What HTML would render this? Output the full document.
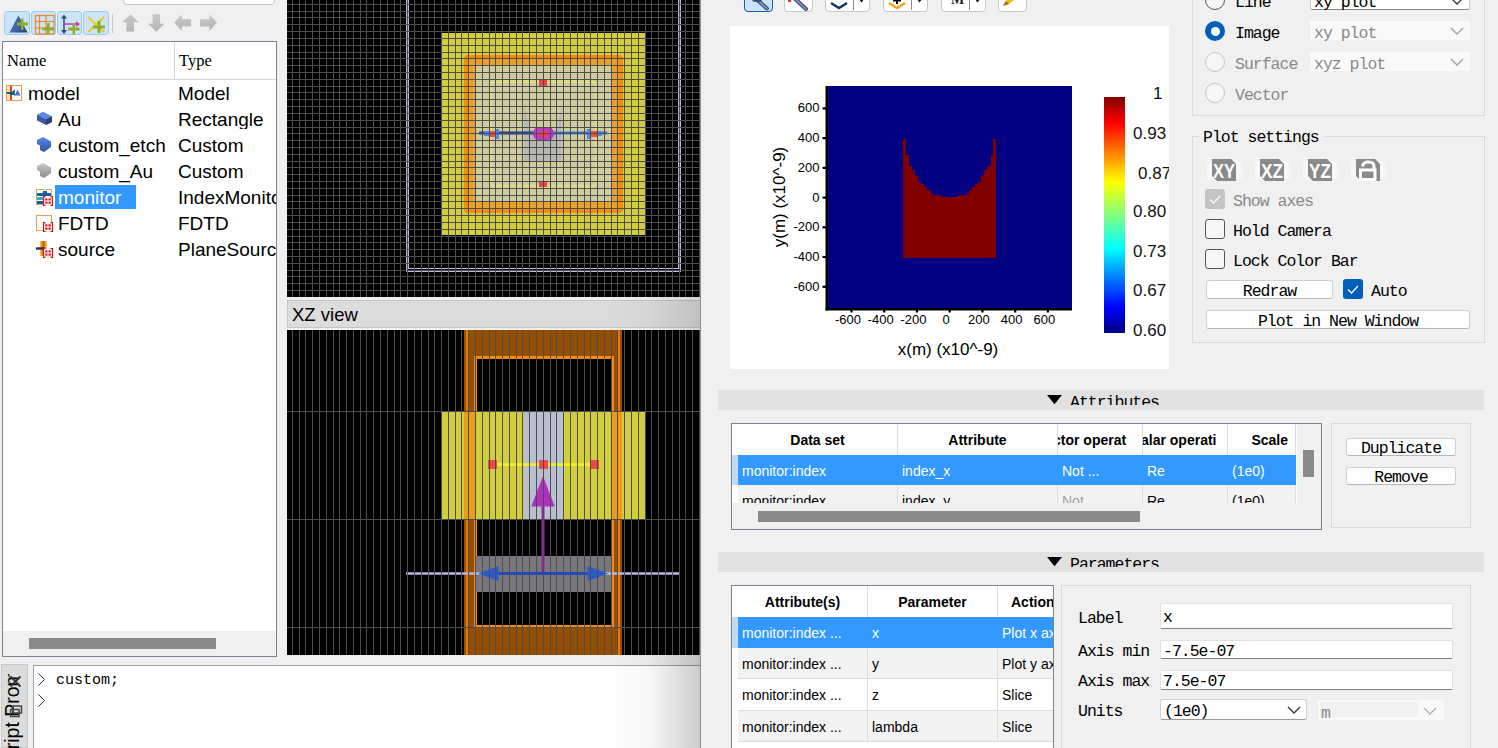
<!DOCTYPE html><html><head><meta charset="utf-8"><style>
html,body{margin:0;padding:0;}
body{width:1498px;height:748px;overflow:hidden;position:relative;background:#f0f0f0;font-family:"Liberation Sans",sans-serif;}
div{box-sizing:border-box;}
.m{font-family:"Liberation Mono",monospace;}
</style></head><body>
<div style="position:absolute;left:123px;top:-12px;width:152px;height:17px;background:#fff;border:1px solid #c4c4c4;border-radius:0 0 4px 4px;"></div>
<div style="position:absolute;left:4px;top:11px;width:26px;height:24px;background:#cce4f7;border:1px solid #99cdf9;border-radius:3px;"></div>
<div style="position:absolute;left:31px;top:11px;width:25px;height:24px;background:#cce4f7;border:1px solid #99cdf9;border-radius:3px;"></div>
<div style="position:absolute;left:57px;top:11px;width:25px;height:24px;background:#cce4f7;border:1px solid #99cdf9;border-radius:3px;"></div>
<div style="position:absolute;left:83px;top:11px;width:26px;height:24px;background:#cce4f7;border:1px solid #99cdf9;border-radius:3px;"></div>
<div style="position:absolute;left:112px;top:14px;width:1px;height:19px;background:#c8c8c8;"></div>
<div style="position:absolute;left:2px;top:41px;width:275px;height:616px;background:#fff;border:1px solid #7a8391;"></div>
<div style="position:absolute;left:3px;top:79px;width:273px;height:1px;background:#d5d5d5;"></div>
<div style="position:absolute;left:174px;top:42px;width:1px;height:37px;background:#d5d5d5;"></div>
<div style="position:absolute;left:7px;top:52.75px;font-family:'Liberation Serif', serif;font-size:16.5px;line-height:1;color:#000;white-space:nowrap;">Name</div>
<div style="position:absolute;left:179px;top:52.75px;font-family:'Liberation Serif', serif;font-size:16.5px;line-height:1;color:#000;white-space:nowrap;">Type</div>
<div style="position:absolute;left:28px;top:83.5px;font-family:'Liberation Sans', sans-serif;font-size:19px;line-height:1;color:#000;white-space:nowrap;">model</div>
<div style="position:absolute;left:178px;top:83.5px;width:98px;overflow:hidden;font-size:19px;line-height:1;white-space:nowrap;">Model</div>
<div style="position:absolute;left:58px;top:109.5px;font-family:'Liberation Sans', sans-serif;font-size:19px;line-height:1;color:#000;white-space:nowrap;">Au</div>
<div style="position:absolute;left:178px;top:109.5px;width:98px;overflow:hidden;font-size:19px;line-height:1;white-space:nowrap;">Rectangle</div>
<div style="position:absolute;left:58px;top:135.5px;font-family:'Liberation Sans', sans-serif;font-size:19px;line-height:1;color:#000;white-space:nowrap;">custom_etch</div>
<div style="position:absolute;left:178px;top:135.5px;width:98px;overflow:hidden;font-size:19px;line-height:1;white-space:nowrap;">Custom</div>
<div style="position:absolute;left:58px;top:161.5px;font-family:'Liberation Sans', sans-serif;font-size:19px;line-height:1;color:#000;white-space:nowrap;">custom_Au</div>
<div style="position:absolute;left:178px;top:161.5px;width:98px;overflow:hidden;font-size:19px;line-height:1;white-space:nowrap;">Custom</div>
<div style="position:absolute;left:55px;top:185px;width:81px;height:24px;background:#3399ff;"></div>
<div style="position:absolute;left:58px;top:187.5px;font-family:'Liberation Sans', sans-serif;font-size:19px;line-height:1;color:#fff;white-space:nowrap;">monitor</div>
<div style="position:absolute;left:178px;top:187.5px;width:98px;overflow:hidden;font-size:19px;line-height:1;white-space:nowrap;">IndexMonitor</div>
<div style="position:absolute;left:58px;top:213.5px;font-family:'Liberation Sans', sans-serif;font-size:19px;line-height:1;color:#000;white-space:nowrap;">FDTD</div>
<div style="position:absolute;left:178px;top:213.5px;width:98px;overflow:hidden;font-size:19px;line-height:1;white-space:nowrap;">FDTD</div>
<div style="position:absolute;left:58px;top:239.5px;font-family:'Liberation Sans', sans-serif;font-size:19px;line-height:1;color:#000;white-space:nowrap;">source</div>
<div style="position:absolute;left:178px;top:239.5px;width:98px;overflow:hidden;font-size:19px;line-height:1;white-space:nowrap;">PlaneSource</div>
<div style="position:absolute;left:3px;top:631px;width:273px;height:25px;background:#f0f0f0;"></div>
<div style="position:absolute;left:29px;top:638px;width:187px;height:11px;background:#8a8a8a;"></div>
<div style="position:absolute;left:33px;top:665px;width:668px;height:83px;background:#fff;border-top:1px solid #a0a0a0;border-left:1px solid #a0a0a0;"></div>
<div style="position:absolute;left:1px;top:664px;width:27px;height:84px;background:#dcdcdc;border:1px solid #c8c8c8;"></div>
<svg style="position:absolute;left:36px;top:671px" width="12" height="40"><path d="M2.5 2.5 L8.5 8.5 L2.5 14.5 M2.5 23.5 L8.5 29.5 L2.5 35.5" fill="none" stroke="#2a2a60" stroke-width="1"/></svg>
<div style="position:absolute;left:56px;top:673px;font-family:'Liberation Mono', monospace;font-size:15px;line-height:1;color:#000;white-space:nowrap;">custom;</div>
<svg style="position:absolute;left:0;top:0" width="230" height="40">
<defs>
<linearGradient id="tri" x1="0" y1="0" x2="1" y2="1"><stop offset="0" stop-color="#2a4a8a"/><stop offset="0.5" stop-color="#4a6ab0"/><stop offset="1" stop-color="#1e3a70"/></linearGradient>
<linearGradient id="agr" x1="0" y1="0" x2="0" y2="1"><stop offset="0" stop-color="#c8c8c8"/><stop offset="1" stop-color="#b4b4b4"/></linearGradient>
</defs>
<path d="M9.5 32.5 L18.5 15.5 L27.5 32.5 Z" fill="url(#tri)"/>
<path d="M21 18.5 h2.5 v4 h4.5 v3 h-4.5 v4.5 h-2.5 v-4.5 h-4 v-3 h4 Z" fill="#90ad2c"/>
<g fill="none" stroke="#f0862a" stroke-width="1.2">
<rect x="35.5" y="15.5" width="18.5" height="18.5"/>
<line x1="39.5" y1="15.5" x2="39.5" y2="34"/><line x1="46" y1="15.5" x2="46" y2="34"/>
<line x1="35.5" y1="21.5" x2="54" y2="21.5"/><line x1="35.5" y1="28" x2="54" y2="28"/>
</g>
<path d="M47 23 h2.5 v4.5 h4.5 v3 h-4.5 v4 h-2.5 v-4 h-4.5 v-3 h4.5 Z" fill="#90ad2c"/>
<line x1="64" y1="16" x2="64" y2="33" stroke="#2a4a80" stroke-width="1.5"/>
<path d="M64 14.5 L61 18.5 H67 Z M64 34 L61 30 H67 Z" fill="#2a4a80"/>
<line x1="65" y1="24" x2="77" y2="24" stroke="#d030d0" stroke-width="1.5"/>
<path d="M80 24 L76 21 V27 Z" fill="#d030d0"/>
<path d="M72.5 23 h2.5 v4.5 h4.5 v3 h-4.5 v4 h-2.5 v-4 h-4.5 v-3 h4.5 Z" fill="#90ad2c"/>
<g stroke="#f0c820" stroke-width="2" fill="none"><line x1="88" y1="17" x2="104" y2="32"/><line x1="104" y1="17" x2="88" y2="32"/></g>
<path d="M97.5 21 h3 v4.5 h4.5 v3 h-4.5 v4.5 h-3 v-4.5 h-4.5 v-3 h4.5 Z" fill="#90ad2c"/>
<path d="M130.5 14.2 L138.7 22.2 H134 V31.4 H126.4 V22.2 H121.9 Z" fill="url(#agr)"/>
<path d="M156.3 31.8 L164.6 23.8 H160 V14.3 H152.6 V23.8 H148 Z" fill="url(#agr)"/>
<path d="M174.1 22.6 L181.9 14.7 V19.3 H191 V26.6 H181.9 V30.8 Z" fill="url(#agr)"/>
<path d="M217.2 22.6 L209.4 14.7 V19.3 H200.1 V26.6 H209.4 V30.8 Z" fill="url(#agr)"/>
</svg>
<svg style="position:absolute;left:0;top:80px" width="60" height="180" viewBox="0 80 60 180">
<defs>
<linearGradient id="brk" x1="0" y1="0" x2="0" y2="1"><stop offset="0" stop-color="#5a8ae8"/><stop offset="1" stop-color="#2a50a8"/></linearGradient>
<linearGradient id="gbk" x1="0" y1="0" x2="0" y2="1"><stop offset="0" stop-color="#c8c8c8"/><stop offset="1" stop-color="#8c8c8c"/></linearGradient>
<linearGradient id="src" x1="0" y1="0" x2="1" y2="0"><stop offset="0" stop-color="#f8d040"/><stop offset="0.5" stop-color="#d05818"/><stop offset="1" stop-color="#f8d040"/></linearGradient>
</defs>
<rect x="6.5" y="85.5" width="15" height="15" fill="none" stroke="#f59a50" stroke-width="1"/>
<rect x="7" y="86" width="3" height="14" fill="#fff3b0"/>
<rect x="10" y="86" width="2" height="14" fill="#e83c1c"/>
<path d="M6.5 92.8 H12 L14 91 V94.6 Z" fill="#0a5a98" stroke="#0a5a98" stroke-width="1.6"/>
<path d="M14.5 95.5 L17.5 89.5 L20.5 95.5 Z" fill="#4f74c0"/>
<path d="M37 115 L43 112 L52 116.5 V122 L46 125 L37 120.5 Z" fill="#3e5a98"/>
<path d="M37 115 L43 112 L52 116.5 L46 119.5 Z" fill="#5a88e8"/>
<path d="M46 119.5 L52 116.5 V122 L46 125 Z" fill="#2a4278"/>
<path d="M37 140 L43 137 L51 141.5 V147 L44 152 L40 150 V145.5 L37 144 Z" fill="url(#brk)"/>
<path d="M37 166 L43 163 L51 167.5 V173 L44 178 L40 176 V171.5 L37 170 Z" fill="url(#gbk)"/>
<rect x="36.5" y="189.5" width="15" height="15" fill="#fff" stroke="#b8b860" stroke-width="1"/>
<rect x="37" y="193" width="14" height="3" fill="#1e5aa8"/>
<rect x="37" y="197" width="8" height="3" fill="#30b0d0"/>
<rect x="37" y="201" width="8" height="3" fill="#1e5aa8"/>
<rect x="43" y="191" width="4" height="3" fill="#1e5aa8"/>
<rect x="36.5" y="215.5" width="15" height="15" fill="none" stroke="#f5a050" stroke-width="1"/>
<rect x="40" y="241" width="7" height="15" fill="url(#src)"/>
<line x1="36" y1="248.5" x2="45" y2="248.5" stroke="#303848" stroke-width="2.5"/>
</svg>
<svg style="position:absolute;left:43px;top:195.5px" width="10" height="10"><rect x="0.5" y="0.5" width="9" height="9" fill="#fff"/><path d="M2.5 0.5 H0.5 V9.5 H2.5 M7.5 0.5 H9.5 V9.5 H7.5" fill="none" stroke="#e01010" stroke-width="1.3"/><rect x="2.3" y="2.3" width="2.2" height="2.2" fill="#e01010"/><rect x="5.5" y="2.3" width="2.2" height="2.2" fill="#e01010"/><rect x="2.3" y="5.5" width="2.2" height="2.2" fill="#e01010"/><rect x="5.5" y="5.5" width="2.2" height="2.2" fill="#e01010"/></svg>
<svg style="position:absolute;left:43px;top:221.5px" width="10" height="10"><rect x="0.5" y="0.5" width="9" height="9" fill="#fff"/><path d="M2.5 0.5 H0.5 V9.5 H2.5 M7.5 0.5 H9.5 V9.5 H7.5" fill="none" stroke="#e01010" stroke-width="1.3"/><rect x="2.3" y="2.3" width="2.2" height="2.2" fill="#e01010"/><rect x="5.5" y="2.3" width="2.2" height="2.2" fill="#e01010"/><rect x="2.3" y="5.5" width="2.2" height="2.2" fill="#e01010"/><rect x="5.5" y="5.5" width="2.2" height="2.2" fill="#e01010"/></svg>
<svg style="position:absolute;left:43px;top:247.5px" width="10" height="10"><rect x="0.5" y="0.5" width="9" height="9" fill="#fff"/><path d="M2.5 0.5 H0.5 V9.5 H2.5 M7.5 0.5 H9.5 V9.5 H7.5" fill="none" stroke="#e01010" stroke-width="1.3"/><rect x="2.3" y="2.3" width="2.2" height="2.2" fill="#e01010"/><rect x="5.5" y="2.3" width="2.2" height="2.2" fill="#e01010"/><rect x="2.3" y="5.5" width="2.2" height="2.2" fill="#e01010"/><rect x="5.5" y="5.5" width="2.2" height="2.2" fill="#e01010"/></svg>
<div style="position:absolute;left:1px;top:664px;width:27px;height:84px;overflow:hidden;"><div style="position:absolute;left:1px;top:108px;height:21px;transform-origin:0 0;transform:rotate(-90deg);font-size:19.5px;line-height:21px;white-space:nowrap;">Script Prompt</div></div>
<div style="position:absolute;left:1px;top:664px;width:27px;height:10px;background:#dcdcdc;border:1px solid #c8c8c8;border-bottom:none;"></div>
<svg style="position:absolute;left:8px;top:674px" width="16" height="48"><path d="M2.5 2.5 L12.5 12.5 M12.5 2.5 L2.5 12.5" stroke="#333" stroke-width="1.8"/><rect x="5" y="32" width="8.5" height="7" fill="none" stroke="#444" stroke-width="1.5"/><rect x="2.5" y="35.5" width="8.5" height="7" fill="none" stroke="#444" stroke-width="1.5"/></svg>
<svg style="position:absolute;left:287px;top:0px" width="414" height="297" viewBox="287 0 414 297" shape-rendering="crispEdges">
<rect x="287" y="0" width="414" height="297" fill="#000"/>
<rect x="442" y="33" width="204" height="202" fill="#d2cd3f"/>
<rect x="464" y="55" width="159" height="158" rx="4" fill="#f78b0e"/>
<rect x="468" y="59" width="151" height="150" rx="3" fill="#eba22c"/>
<rect x="475" y="66" width="137" height="136" fill="#cfcb9c"/>
<rect x="490.5" y="81.5" width="106" height="105" rx="5" fill="none" stroke="#dedb88" stroke-width="3" shape-rendering="auto"/>
<path d="M524 106 L530 130 L556 130 L562 106 L562 161 L524 161 Z" fill="#b9b9b3" shape-rendering="auto"/>

<path d="M406.5 -5 V271.5 H680.5 V-5" fill="none" stroke="#bdbbe6" stroke-width="1"/>
<path d="M408.5 -5 V268.5 H678.5 V-5" fill="none" stroke="#bdbbe6" stroke-width="1"/>
<g shape-rendering="auto">
<rect x="479" y="131.5" width="64" height="3" fill="#0a3aa0"/>
<rect x="543" y="131.5" width="64" height="3" fill="#3a8ef0"/>
<rect x="479" y="132.5" width="128" height="1" fill="#1a50c0"/>
<path d="M531.8 133.5 L536 127 H551 L555.3 133.5 L551 140 H536 Z" fill="#c535d5"/>
<rect x="539" y="131" width="4" height="6" fill="#f04040"/>
<rect x="544" y="131" width="4" height="6" fill="#f04040"/>
<rect x="539" y="80" width="8" height="6" fill="#f04040"/>
<rect x="539" y="181" width="8" height="6" fill="#f04040"/>
<rect x="489" y="131" width="6" height="6" fill="#f04848"/>
<rect x="591" y="131" width="6" height="6" fill="#f04848"/>
<rect x="496" y="129" width="3" height="10" fill="#4a88e8"/>
<rect x="587" y="129" width="3" height="10" fill="#4a88e8"/>
<rect x="484" y="131" width="5" height="5" fill="#4a88e8"/>
<rect x="597" y="131" width="5" height="5" fill="#4a88e8"/>
</g>

<rect x="292" y="0" width="1" height="297" fill="#4d4d4d"/>
<rect x="299" y="0" width="1" height="297" fill="#4d4d4d"/>
<rect x="305" y="0" width="1" height="297" fill="#4d4d4d"/>
<rect x="312" y="0" width="1" height="297" fill="#4d4d4d"/>
<rect x="319" y="0" width="1" height="297" fill="#4d4d4d"/>
<rect x="326" y="0" width="1" height="297" fill="#4d4d4d"/>
<rect x="333" y="0" width="1" height="297" fill="#4d4d4d"/>
<rect x="339" y="0" width="1" height="297" fill="#4d4d4d"/>
<rect x="346" y="0" width="1" height="297" fill="#4d4d4d"/>
<rect x="353" y="0" width="1" height="297" fill="#4d4d4d"/>
<rect x="360" y="0" width="1" height="297" fill="#4d4d4d"/>
<rect x="366" y="0" width="1" height="297" fill="#4d4d4d"/>
<rect x="373" y="0" width="1" height="297" fill="#4d4d4d"/>
<rect x="380" y="0" width="1" height="297" fill="#4d4d4d"/>
<rect x="387" y="0" width="1" height="297" fill="#4d4d4d"/>
<rect x="394" y="0" width="1" height="297" fill="#4d4d4d"/>
<rect x="400" y="0" width="1" height="297" fill="#4d4d4d"/>
<rect x="407" y="0" width="1" height="297" fill="#4d4d4d"/>
<rect x="414" y="0" width="1" height="297" fill="#4d4d4d"/>
<rect x="421" y="0" width="1" height="297" fill="#4d4d4d"/>
<rect x="428" y="0" width="1" height="297" fill="#4d4d4d"/>
<rect x="434" y="0" width="1" height="297" fill="#4d4d4d"/>
<rect x="441" y="0" width="1" height="297" fill="#4d4d4d"/>
<rect x="448" y="0" width="1" height="297" fill="#4d4d4d"/>
<rect x="455" y="0" width="1" height="297" fill="#4d4d4d"/>
<rect x="461" y="0" width="1" height="297" fill="#4d4d4d"/>
<rect x="468" y="0" width="1" height="297" fill="#4d4d4d"/>
<rect x="475" y="0" width="1" height="297" fill="#4d4d4d"/>
<rect x="482" y="0" width="1" height="297" fill="#4d4d4d"/>
<rect x="489" y="0" width="1" height="297" fill="#4d4d4d"/>
<rect x="495" y="0" width="1" height="297" fill="#4d4d4d"/>
<rect x="502" y="0" width="1" height="297" fill="#4d4d4d"/>
<rect x="509" y="0" width="1" height="297" fill="#4d4d4d"/>
<rect x="516" y="0" width="1" height="297" fill="#4d4d4d"/>
<rect x="522" y="0" width="1" height="297" fill="#4d4d4d"/>
<rect x="529" y="0" width="1" height="297" fill="#4d4d4d"/>
<rect x="536" y="0" width="1" height="297" fill="#4d4d4d"/>
<rect x="543" y="0" width="1" height="297" fill="#4d4d4d"/>
<rect x="550" y="0" width="1" height="297" fill="#4d4d4d"/>
<rect x="556" y="0" width="1" height="297" fill="#4d4d4d"/>
<rect x="563" y="0" width="1" height="297" fill="#4d4d4d"/>
<rect x="570" y="0" width="1" height="297" fill="#4d4d4d"/>
<rect x="577" y="0" width="1" height="297" fill="#4d4d4d"/>
<rect x="584" y="0" width="1" height="297" fill="#4d4d4d"/>
<rect x="590" y="0" width="1" height="297" fill="#4d4d4d"/>
<rect x="597" y="0" width="1" height="297" fill="#4d4d4d"/>
<rect x="604" y="0" width="1" height="297" fill="#4d4d4d"/>
<rect x="611" y="0" width="1" height="297" fill="#4d4d4d"/>
<rect x="617" y="0" width="1" height="297" fill="#4d4d4d"/>
<rect x="624" y="0" width="1" height="297" fill="#4d4d4d"/>
<rect x="631" y="0" width="1" height="297" fill="#4d4d4d"/>
<rect x="638" y="0" width="1" height="297" fill="#4d4d4d"/>
<rect x="645" y="0" width="1" height="297" fill="#4d4d4d"/>
<rect x="651" y="0" width="1" height="297" fill="#4d4d4d"/>
<rect x="658" y="0" width="1" height="297" fill="#4d4d4d"/>
<rect x="665" y="0" width="1" height="297" fill="#4d4d4d"/>
<rect x="672" y="0" width="1" height="297" fill="#4d4d4d"/>
<rect x="679" y="0" width="1" height="297" fill="#4d4d4d"/>
<rect x="685" y="0" width="1" height="297" fill="#4d4d4d"/>
<rect x="692" y="0" width="1" height="297" fill="#4d4d4d"/>
<rect x="699" y="0" width="1" height="297" fill="#4d4d4d"/>
<rect x="287" y="4" width="414" height="1" fill="#4d4d4d"/>
<rect x="287" y="11" width="414" height="1" fill="#4d4d4d"/>
<rect x="287" y="17" width="414" height="1" fill="#4d4d4d"/>
<rect x="287" y="24" width="414" height="1" fill="#4d4d4d"/>
<rect x="287" y="31" width="414" height="1" fill="#4d4d4d"/>
<rect x="287" y="38" width="414" height="1" fill="#4d4d4d"/>
<rect x="287" y="45" width="414" height="1" fill="#4d4d4d"/>
<rect x="287" y="52" width="414" height="1" fill="#4d4d4d"/>
<rect x="287" y="58" width="414" height="1" fill="#4d4d4d"/>
<rect x="287" y="65" width="414" height="1" fill="#4d4d4d"/>
<rect x="287" y="72" width="414" height="1" fill="#4d4d4d"/>
<rect x="287" y="79" width="414" height="1" fill="#4d4d4d"/>
<rect x="287" y="86" width="414" height="1" fill="#4d4d4d"/>
<rect x="287" y="92" width="414" height="1" fill="#4d4d4d"/>
<rect x="287" y="99" width="414" height="1" fill="#4d4d4d"/>
<rect x="287" y="106" width="414" height="1" fill="#4d4d4d"/>
<rect x="287" y="113" width="414" height="1" fill="#4d4d4d"/>
<rect x="287" y="120" width="414" height="1" fill="#4d4d4d"/>
<rect x="287" y="127" width="414" height="1" fill="#4d4d4d"/>
<rect x="287" y="133" width="414" height="1" fill="#4d4d4d"/>
<rect x="287" y="140" width="414" height="1" fill="#4d4d4d"/>
<rect x="287" y="147" width="414" height="1" fill="#4d4d4d"/>
<rect x="287" y="154" width="414" height="1" fill="#4d4d4d"/>
<rect x="287" y="161" width="414" height="1" fill="#4d4d4d"/>
<rect x="287" y="167" width="414" height="1" fill="#4d4d4d"/>
<rect x="287" y="174" width="414" height="1" fill="#4d4d4d"/>
<rect x="287" y="181" width="414" height="1" fill="#4d4d4d"/>
<rect x="287" y="188" width="414" height="1" fill="#4d4d4d"/>
<rect x="287" y="195" width="414" height="1" fill="#4d4d4d"/>
<rect x="287" y="201" width="414" height="1" fill="#4d4d4d"/>
<rect x="287" y="208" width="414" height="1" fill="#4d4d4d"/>
<rect x="287" y="215" width="414" height="1" fill="#4d4d4d"/>
<rect x="287" y="222" width="414" height="1" fill="#4d4d4d"/>
<rect x="287" y="229" width="414" height="1" fill="#4d4d4d"/>
<rect x="287" y="236" width="414" height="1" fill="#4d4d4d"/>
<rect x="287" y="242" width="414" height="1" fill="#4d4d4d"/>
<rect x="287" y="249" width="414" height="1" fill="#4d4d4d"/>
<rect x="287" y="256" width="414" height="1" fill="#4d4d4d"/>
<rect x="287" y="263" width="414" height="1" fill="#4d4d4d"/>
<rect x="287" y="270" width="414" height="1" fill="#4d4d4d"/>
<rect x="287" y="276" width="414" height="1" fill="#4d4d4d"/>
<rect x="287" y="283" width="414" height="1" fill="#4d4d4d"/>
<rect x="287" y="290" width="414" height="1" fill="#4d4d4d"/>

</svg>
<div style="position:absolute;left:287px;top:300px;width:414px;height:28px;background:#dcdcdc;border:1px solid #c4c4c4;"></div>
<div style="position:absolute;left:292px;top:305.75px;font-family:'Liberation Sans', sans-serif;font-size:18.5px;line-height:1;color:#000;white-space:nowrap;">XZ view</div>
<svg style="position:absolute;left:287px;top:330px" width="414" height="325" viewBox="287 330 414 325" shape-rendering="crispEdges">
<rect x="287" y="330" width="414" height="325" fill="#000"/>
<rect x="464" y="330" width="158" height="325" fill="#964e00"/>
<rect x="466" y="330" width="2" height="325" fill="#f07800"/>
<rect x="618" y="330" width="2" height="325" fill="#f07800"/>
<rect x="474" y="356" width="140" height="272" fill="#f88a10"/>
<rect x="477" y="359" width="134" height="266" fill="#000"/>
<rect x="442" y="411" width="203" height="109" fill="#d2cd3f"/>
<rect x="464" y="411" width="12" height="109" fill="#eb9b1e"/>
<rect x="611" y="411" width="11" height="109" fill="#eb9b1e"/>
<rect x="524" y="411" width="39" height="109" fill="#b8bfcf"/>
<rect x="476" y="556" width="135" height="36" fill="#77777d"/>

<g shape-rendering="auto">
<line x1="492" y1="464.5" x2="594" y2="464.5" stroke="#f0f020" stroke-width="3"/>
<rect x="488" y="460" width="9" height="9" fill="#f04848"/>
<rect x="539" y="460" width="9" height="9" fill="#f04848"/>
<rect x="590" y="460" width="9" height="9" fill="#f04848"/>
<line x1="406" y1="573.5" x2="679" y2="573.5" stroke="#b8b8e0" stroke-width="2.5"/>
<line x1="485" y1="573.5" x2="602" y2="573.5" stroke="#1e48c0" stroke-width="3"/>
<path d="M478 573.5 L498.5 566 V581 Z" fill="#2a58d0"/>
<path d="M608 573.5 L587.5 566 V581 Z" fill="#2a58d0"/>
<line x1="543" y1="505" x2="543" y2="572" stroke="#a020a8" stroke-width="3"/>
<path d="M543 476 L554.8 506.5 H531.2 Z" fill="#b030c0"/>
</g>

<rect x="292" y="330" width="1" height="325" fill="#4d4d4d"/>
<rect x="299" y="330" width="1" height="325" fill="#4d4d4d"/>
<rect x="305" y="330" width="1" height="325" fill="#4d4d4d"/>
<rect x="312" y="330" width="1" height="325" fill="#4d4d4d"/>
<rect x="319" y="330" width="1" height="325" fill="#4d4d4d"/>
<rect x="326" y="330" width="1" height="325" fill="#4d4d4d"/>
<rect x="333" y="330" width="1" height="325" fill="#4d4d4d"/>
<rect x="339" y="330" width="1" height="325" fill="#4d4d4d"/>
<rect x="346" y="330" width="1" height="325" fill="#4d4d4d"/>
<rect x="353" y="330" width="1" height="325" fill="#4d4d4d"/>
<rect x="360" y="330" width="1" height="325" fill="#4d4d4d"/>
<rect x="366" y="330" width="1" height="325" fill="#4d4d4d"/>
<rect x="373" y="330" width="1" height="325" fill="#4d4d4d"/>
<rect x="380" y="330" width="1" height="325" fill="#4d4d4d"/>
<rect x="387" y="330" width="1" height="325" fill="#4d4d4d"/>
<rect x="394" y="330" width="1" height="325" fill="#4d4d4d"/>
<rect x="400" y="330" width="1" height="325" fill="#4d4d4d"/>
<rect x="407" y="330" width="1" height="325" fill="#4d4d4d"/>
<rect x="414" y="330" width="1" height="325" fill="#4d4d4d"/>
<rect x="421" y="330" width="1" height="325" fill="#4d4d4d"/>
<rect x="428" y="330" width="1" height="325" fill="#4d4d4d"/>
<rect x="434" y="330" width="1" height="325" fill="#4d4d4d"/>
<rect x="441" y="330" width="1" height="325" fill="#4d4d4d"/>
<rect x="448" y="330" width="1" height="325" fill="#4d4d4d"/>
<rect x="455" y="330" width="1" height="325" fill="#4d4d4d"/>
<rect x="461" y="330" width="1" height="325" fill="#4d4d4d"/>
<rect x="468" y="330" width="1" height="325" fill="#4d4d4d"/>
<rect x="475" y="330" width="1" height="325" fill="#4d4d4d"/>
<rect x="482" y="330" width="1" height="325" fill="#4d4d4d"/>
<rect x="489" y="330" width="1" height="325" fill="#4d4d4d"/>
<rect x="495" y="330" width="1" height="325" fill="#4d4d4d"/>
<rect x="502" y="330" width="1" height="325" fill="#4d4d4d"/>
<rect x="509" y="330" width="1" height="325" fill="#4d4d4d"/>
<rect x="516" y="330" width="1" height="325" fill="#4d4d4d"/>
<rect x="522" y="330" width="1" height="325" fill="#4d4d4d"/>
<rect x="529" y="330" width="1" height="325" fill="#4d4d4d"/>
<rect x="536" y="330" width="1" height="325" fill="#4d4d4d"/>
<rect x="543" y="330" width="1" height="325" fill="#4d4d4d"/>
<rect x="550" y="330" width="1" height="325" fill="#4d4d4d"/>
<rect x="556" y="330" width="1" height="325" fill="#4d4d4d"/>
<rect x="563" y="330" width="1" height="325" fill="#4d4d4d"/>
<rect x="570" y="330" width="1" height="325" fill="#4d4d4d"/>
<rect x="577" y="330" width="1" height="325" fill="#4d4d4d"/>
<rect x="584" y="330" width="1" height="325" fill="#4d4d4d"/>
<rect x="590" y="330" width="1" height="325" fill="#4d4d4d"/>
<rect x="597" y="330" width="1" height="325" fill="#4d4d4d"/>
<rect x="604" y="330" width="1" height="325" fill="#4d4d4d"/>
<rect x="611" y="330" width="1" height="325" fill="#4d4d4d"/>
<rect x="617" y="330" width="1" height="325" fill="#4d4d4d"/>
<rect x="624" y="330" width="1" height="325" fill="#4d4d4d"/>
<rect x="631" y="330" width="1" height="325" fill="#4d4d4d"/>
<rect x="638" y="330" width="1" height="325" fill="#4d4d4d"/>
<rect x="645" y="330" width="1" height="325" fill="#4d4d4d"/>
<rect x="651" y="330" width="1" height="325" fill="#4d4d4d"/>
<rect x="658" y="330" width="1" height="325" fill="#4d4d4d"/>
<rect x="665" y="330" width="1" height="325" fill="#4d4d4d"/>
<rect x="672" y="330" width="1" height="325" fill="#4d4d4d"/>
<rect x="679" y="330" width="1" height="325" fill="#4d4d4d"/>
<rect x="685" y="330" width="1" height="325" fill="#4d4d4d"/>
<rect x="692" y="330" width="1" height="325" fill="#4d4d4d"/>
<rect x="699" y="330" width="1" height="325" fill="#4d4d4d"/>
<rect x="287" y="411" width="414" height="1" fill="#4d4d4d"/>
<rect x="287" y="519" width="414" height="1" fill="#4d4d4d"/>
<rect x="287" y="627" width="414" height="1" fill="#4d4d4d"/>

</svg>
<div style="position:absolute;left:287px;top:655px;width:414px;height:10px;background:#f0f0f0;"></div>
<div style="position:absolute;left:600px;top:655px;width:100px;height:93px;background:linear-gradient(to right, rgba(0,0,0,0), rgba(0,0,0,0.03) 50%, rgba(0,0,0,0.2));"></div>
<div style="position:absolute;left:600px;top:297px;width:100px;height:33px;background:linear-gradient(to right, rgba(0,0,0,0), rgba(0,0,0,0.03) 50%, rgba(0,0,0,0.12));"></div>
<div style="position:absolute;left:701px;top:0px;width:797px;height:748px;background:#f0f0f0;"></div>
<div style="position:absolute;left:700px;top:0px;width:1px;height:748px;background:#8f8f8f;"></div>
<div style="position:absolute;left:744px;top:-16px;width:29px;height:28px;background:#cce4f7;border:1.5px solid #1a5fa8;border-radius:4px;"></div>
<svg style="position:absolute;left:744px;top:0" width="29" height="12"><line x1="10" y1="-3" x2="23" y2="8.5" stroke="#3c4f7a" stroke-width="4" stroke-linecap="round"/><line x1="10" y1="-3" x2="23" y2="8.5" stroke="#8a9cc0" stroke-width="1.6" stroke-linecap="round"/><ellipse cx="13" cy="-0.5" rx="5" ry="2.5" fill="#3c4f7a"/></svg>
<div style="position:absolute;left:784px;top:-16px;width:29px;height:28px;background:#fff;border:1px solid #c8c8c8;border-radius:4px;"></div>
<svg style="position:absolute;left:784px;top:0" width="29" height="12"><line x1="8" y1="-4" x2="22" y2="9" stroke="#3c4f7a" stroke-width="4" stroke-linecap="round"/><line x1="8" y1="-4" x2="22" y2="9" stroke="#8a9cc0" stroke-width="1.5" stroke-linecap="round"/><rect x="4" y="0" width="3" height="2" fill="#e04010"/></svg>
<div style="position:absolute;left:825px;top:-16px;width:45px;height:28px;background:#fff;border:1px solid #c8c8c8;border-radius:4px;"></div>
<div style="position:absolute;left:853px;top:0px;width:1px;height:10px;background:#8a8a8a;"></div>
<svg style="position:absolute;left:857px;top:0" width="10" height="6"><path d="M2 -1 L7 -1 L4.5 2.5 Z" fill="#000"/></svg>
<svg style="position:absolute;left:828px;top:0" width="22" height="12"><path d="M3 3 L11 8 L19 3" fill="none" stroke="#0d3a66" stroke-width="2.5"/></svg>
<div style="position:absolute;left:883px;top:-16px;width:45px;height:28px;background:#fff;border:1px solid #c8c8c8;border-radius:4px;"></div>
<div style="position:absolute;left:911px;top:0px;width:1px;height:10px;background:#8a8a8a;"></div>
<svg style="position:absolute;left:915px;top:0" width="10" height="6"><path d="M2 -1 L7 -1 L4.5 2.5 Z" fill="#000"/></svg>
<svg style="position:absolute;left:886px;top:0" width="22" height="12"><path d="M3 3 L11 8 L19 3" fill="none" stroke="#f5a21a" stroke-width="2.5"/><rect x="10" y="0" width="2" height="4" fill="#000"/><rect x="7" y="0" width="8" height="1.5" fill="#000"/></svg>
<div style="position:absolute;left:941px;top:-16px;width:45px;height:28px;background:#fff;border:1px solid #c8c8c8;border-radius:4px;"></div>
<div style="position:absolute;left:969px;top:0px;width:1px;height:10px;background:#8a8a8a;"></div>
<svg style="position:absolute;left:973px;top:0" width="10" height="6"><path d="M2 -1 L7 -1 L4.5 2.5 Z" fill="#000"/></svg>
<div style="position:absolute;left:951px;top:-7px;font-family:'Liberation Serif', serif;font-size:14px;line-height:1;color:#222;white-space:nowrap;font-weight:bold;">M</div>
<div style="position:absolute;left:998px;top:-16px;width:29px;height:28px;background:#fff;border:1px solid #c8c8c8;border-radius:4px;"></div>
<svg style="position:absolute;left:998px;top:0" width="29" height="12"><path d="M5 6 L8 1 L13 -4 L17 -1 L11 4 Z" fill="#f0b818"/><path d="M5 6 L8 1 L11 4 Z" fill="#a87010"/></svg>
<div style="position:absolute;left:730px;top:26px;width:439px;height:343px;background:#fff;"></div>
<svg style="position:absolute;left:730px;top:26px" width="439" height="343" viewBox="730 26 439 343">
<rect x="826.5" y="86" width="245.5" height="223" fill="#000080"/>
<path d="M903.0 139.4 L905.9 139.4 L905.9 155.3 L908.7 155.3 L908.7 165.6 L911.9 165.6 L911.9 170.2 L914.9 170.2 L914.9 175.9 L918.1 175.9 L918.1 181.5 L921.3 181.5 L921.3 184.3 L924.3 184.3 L924.3 187.1 L927.4 187.1 L927.4 189.9 L930.6 189.9 L930.6 192.7 L932.7 192.7 L932.7 195.0 L940.9 195.0 L940.9 197.4 L949.6 197.4 L949.6 197.4 L958.3 197.4 L958.3 195.0 L966.5 195.0 L966.5 192.7 L968.6 192.7 L968.6 189.9 L971.8 189.9 L971.8 187.1 L974.9 187.1 L974.9 184.3 L977.9 184.3 L977.9 181.5 L981.1 181.5 L981.1 175.9 L984.3 175.9 L984.3 170.2 L987.3 170.2 L987.3 165.6 L990.5 165.6 L990.5 155.3 L993.3 155.3 L993.3 139.4 L996.2 139.4 L996.0 258.0 L903.0 258.0 Z" fill="#800000" shape-rendering="crispEdges"/>
<rect x="825.5" y="86" width="2.5" height="224.5" fill="#000"/>
<rect x="825.5" y="308" width="246.5" height="2.5" fill="#000"/>
<rect x="822.5" y="285.7" width="4" height="2.2" fill="#000"/>
<rect x="850.4000000000001" y="309" width="2.2" height="3.5" fill="#000"/>
<rect x="822.5" y="255.9666666666667" width="4" height="2.2" fill="#000"/>
<rect x="883.1333333333333" y="309" width="2.2" height="3.5" fill="#000"/>
<rect x="822.5" y="226.23333333333335" width="4" height="2.2" fill="#000"/>
<rect x="915.8666666666667" y="309" width="2.2" height="3.5" fill="#000"/>
<rect x="822.5" y="196.5" width="4" height="2.2" fill="#000"/>
<rect x="948.6" y="309" width="2.2" height="3.5" fill="#000"/>
<rect x="822.5" y="166.76666666666665" width="4" height="2.2" fill="#000"/>
<rect x="981.3333333333334" y="309" width="2.2" height="3.5" fill="#000"/>
<rect x="822.5" y="137.03333333333333" width="4" height="2.2" fill="#000"/>
<rect x="1014.0666666666667" y="309" width="2.2" height="3.5" fill="#000"/>
<rect x="822.5" y="107.3" width="4" height="2.2" fill="#000"/>
<rect x="1046.8" y="309" width="2.2" height="3.5" fill="#000"/>
<defs><linearGradient id="jet" x1="0" y1="1" x2="0" y2="0"><stop offset="0" stop-color="#000080"/><stop offset="0.11" stop-color="#0000ff"/><stop offset="0.36" stop-color="#00ffff"/><stop offset="0.5" stop-color="#7fff7f"/><stop offset="0.64" stop-color="#ffff00"/><stop offset="0.89" stop-color="#ff0000"/><stop offset="1" stop-color="#800000"/></linearGradient></defs>
<rect x="1104" y="97" width="21" height="236" fill="url(#jet)"/>
</svg>
<div style="position:absolute;left:771.5px;top:279.7px;width:48px;text-align:right;font-size:13px;line-height:14px;color:#000;">-600</div>
<div style="position:absolute;left:817.9000000000001px;top:313px;width:60px;text-align:center;font-size:13px;line-height:14px;color:#000;">-600</div>
<div style="position:absolute;left:771.5px;top:249.9666666666667px;width:48px;text-align:right;font-size:13px;line-height:14px;color:#000;">-400</div>
<div style="position:absolute;left:850.6333333333333px;top:313px;width:60px;text-align:center;font-size:13px;line-height:14px;color:#000;">-400</div>
<div style="position:absolute;left:771.5px;top:220.23333333333335px;width:48px;text-align:right;font-size:13px;line-height:14px;color:#000;">-200</div>
<div style="position:absolute;left:883.3666666666667px;top:313px;width:60px;text-align:center;font-size:13px;line-height:14px;color:#000;">-200</div>
<div style="position:absolute;left:771.5px;top:190.5px;width:48px;text-align:right;font-size:13px;line-height:14px;color:#000;">0</div>
<div style="position:absolute;left:916.1px;top:313px;width:60px;text-align:center;font-size:13px;line-height:14px;color:#000;">0</div>
<div style="position:absolute;left:771.5px;top:160.76666666666665px;width:48px;text-align:right;font-size:13px;line-height:14px;color:#000;">200</div>
<div style="position:absolute;left:948.8333333333334px;top:313px;width:60px;text-align:center;font-size:13px;line-height:14px;color:#000;">200</div>
<div style="position:absolute;left:771.5px;top:131.03333333333333px;width:48px;text-align:right;font-size:13px;line-height:14px;color:#000;">400</div>
<div style="position:absolute;left:981.5666666666667px;top:313px;width:60px;text-align:center;font-size:13px;line-height:14px;color:#000;">400</div>
<div style="position:absolute;left:771.5px;top:101.3px;width:48px;text-align:right;font-size:13px;line-height:14px;color:#000;">600</div>
<div style="position:absolute;left:1014.3px;top:313px;width:60px;text-align:center;font-size:13px;line-height:14px;color:#000;">600</div>
<div style="position:absolute;left:888px;top:341px;width:120px;text-align:center;font-size:17px;line-height:18px;">x(m) (x10^-9)</div>
<div style="position:absolute;left:720px;top:188px;width:120px;text-align:center;font-size:17px;line-height:18px;transform:rotate(-90deg);">y(m) (x10^-9)</div>
<div style="position:absolute;left:1130px;top:26px;width:39px;height:343px;overflow:hidden;">
<div style="position:absolute;left:23px;top:59px;font-size:17px;line-height:18px;color:#111;white-space:nowrap;">1</div>
<div style="position:absolute;left:3px;top:99px;font-size:17px;line-height:18px;color:#111;white-space:nowrap;">0.93</div>
<div style="position:absolute;left:8px;top:139px;font-size:17px;line-height:18px;color:#111;white-space:nowrap;">0.87</div>
<div style="position:absolute;left:3px;top:177px;font-size:17px;line-height:18px;color:#111;white-space:nowrap;">0.80</div>
<div style="position:absolute;left:3px;top:217px;font-size:17px;line-height:18px;color:#111;white-space:nowrap;">0.73</div>
<div style="position:absolute;left:3px;top:256px;font-size:17px;line-height:18px;color:#111;white-space:nowrap;">0.67</div>
<div style="position:absolute;left:3px;top:296px;font-size:17px;line-height:18px;color:#111;white-space:nowrap;">0.60</div>
</div>
<div style="position:absolute;left:1192px;top:-10px;width:293px;height:126px;border:1px solid #d8d8d8;"></div>
<div style="position:absolute;left:1205px;top:-10px;width:20px;height:20px;border-radius:50%;background:#f6f6f6;border:1px solid #555;"></div>
<div style="position:absolute;left:1205px;top:21px;width:20px;height:20px;border-radius:50%;background:#005fb8;"></div>
<div style="position:absolute;left:1210.5px;top:26.5px;width:9px;height:9px;border-radius:50%;background:#fff;"></div>
<div style="position:absolute;left:1205px;top:52px;width:20px;height:20px;border-radius:50%;background:#f6f6f6;border:1px solid #c4c4c4;"></div>
<div style="position:absolute;left:1205px;top:83px;width:20px;height:20px;border-radius:50%;background:#f6f6f6;border:1px solid #c4c4c4;"></div>
<div style="position:absolute;left:1235px;top:-5.775000000000001px;font-family:'Liberation Mono', monospace;font-size:16.5px;line-height:1.1;letter-spacing:-1.0px;color:#000;white-space:nowrap;">Line</div>
<div style="position:absolute;left:1235px;top:25.224999999999998px;font-family:'Liberation Mono', monospace;font-size:16.5px;line-height:1.1;letter-spacing:-1.0px;color:#000;white-space:nowrap;">Image</div>
<div style="position:absolute;left:1235px;top:56.224999999999994px;font-family:'Liberation Mono', monospace;font-size:16.5px;line-height:1.1;letter-spacing:-1.0px;color:#8a8a8a;white-space:nowrap;">Surface</div>
<div style="position:absolute;left:1235px;top:87.225px;font-family:'Liberation Mono', monospace;font-size:16.5px;line-height:1.1;letter-spacing:-1.0px;color:#8a8a8a;white-space:nowrap;">Vector</div>
<div style="position:absolute;left:1310px;top:-10px;width:160px;height:20px;background:#fff;border:1px solid #c8c8c8;border-bottom:1px solid #8a8a8a;border-radius:3px;"></div>
<div style="position:absolute;left:1314px;top:-5.775000000000001px;font-family:'Liberation Mono', monospace;font-size:16.5px;line-height:1.1;letter-spacing:-1.0px;color:#000;white-space:nowrap;">xy plot</div>
<svg style="position:absolute;left:1450px;top:-3px" width="14" height="8"><path d="M1 1 L7 7 L13 1" fill="none" stroke="#333" stroke-width="1.3"/></svg>
<div style="position:absolute;left:1310px;top:21px;width:160px;height:19px;background:#f9f9f9;"></div>
<div style="position:absolute;left:1314px;top:25.224999999999998px;font-family:'Liberation Mono', monospace;font-size:16.5px;line-height:1.1;letter-spacing:-1.0px;color:#8a8a8a;white-space:nowrap;">xy plot</div>
<svg style="position:absolute;left:1450px;top:27px" width="14" height="8"><path d="M1 1 L7 7 L13 1" fill="none" stroke="#a0a0a0" stroke-width="1.3"/></svg>
<div style="position:absolute;left:1310px;top:52px;width:160px;height:19px;background:#f9f9f9;"></div>
<div style="position:absolute;left:1314px;top:56.224999999999994px;font-family:'Liberation Mono', monospace;font-size:16.5px;line-height:1.1;letter-spacing:-1.0px;color:#8a8a8a;white-space:nowrap;">xyz plot</div>
<svg style="position:absolute;left:1450px;top:58px" width="14" height="8"><path d="M1 1 L7 7 L13 1" fill="none" stroke="#a0a0a0" stroke-width="1.3"/></svg>
<div style="position:absolute;left:1192px;top:136px;width:293px;height:207px;border:1px solid #d8d8d8;"></div>
<div style="position:absolute;left:1199px;top:126px;width:126px;height:20px;background:#f0f0f0;"></div>
<div style="position:absolute;left:1203px;top:128.725px;font-family:'Liberation Mono', monospace;font-size:16.5px;line-height:1.1;letter-spacing:-1.0px;color:#000;white-space:nowrap;">Plot settings</div>
<div style="position:absolute;left:1207px;top:161px;width:35px;height:18px;background:#f7f7f7;border-radius:3px;"></div>
<svg style="position:absolute;left:1212px;top:159px" width="25" height="22"><path d="M0 0 H19 L24 5 V22 H5 L0 17 Z" fill="#8a8a8a"/><text x="12" y="19" text-anchor="middle" font-family="Liberation Sans" font-weight="bold" font-size="19.5" fill="#fff" textLength="22" lengthAdjust="spacingAndGlyphs">XY</text></svg>
<div style="position:absolute;left:1255px;top:161px;width:35px;height:18px;background:#f7f7f7;border-radius:3px;"></div>
<svg style="position:absolute;left:1260px;top:159px" width="25" height="22"><path d="M0 0 H19 L24 5 V22 H5 L0 17 Z" fill="#8a8a8a"/><text x="12" y="19" text-anchor="middle" font-family="Liberation Sans" font-weight="bold" font-size="19.5" fill="#fff" textLength="22" lengthAdjust="spacingAndGlyphs">XZ</text></svg>
<div style="position:absolute;left:1303px;top:161px;width:35px;height:18px;background:#f7f7f7;border-radius:3px;"></div>
<svg style="position:absolute;left:1308px;top:159px" width="25" height="22"><path d="M0 0 H19 L24 5 V22 H5 L0 17 Z" fill="#8a8a8a"/><text x="12" y="19" text-anchor="middle" font-family="Liberation Sans" font-weight="bold" font-size="19.5" fill="#fff" textLength="22" lengthAdjust="spacingAndGlyphs">YZ</text></svg>
<div style="position:absolute;left:1351px;top:161px;width:35px;height:18px;background:#f7f7f7;border-radius:3px;"></div>
<svg style="position:absolute;left:1356px;top:159px" width="25" height="22"><path d="M0 0 H19 L24 5 V22 H5 L0 17 Z" fill="#8a8a8a"/><path d="M6.5 7.5 Q7 3 12.5 3 Q18 3 18 7.5 V10" fill="none" stroke="#fff" stroke-width="3"/><rect x="4.5" y="11" width="14.5" height="9.5" fill="none" stroke="#fff" stroke-width="3"/></svg>
<div style="position:absolute;left:1205px;top:189px;width:20px;height:20px;border-radius:3px;background:#c4c4c4;"></div>
<svg style="position:absolute;left:1205px;top:189px" width="20" height="20"><path d="M5 10.5 L8.5 14 L15 7" fill="none" stroke="#fff" stroke-width="1.3"/></svg>
<div style="position:absolute;left:1233px;top:193.22500000000002px;font-family:'Liberation Mono', monospace;font-size:16.5px;line-height:1.1;letter-spacing:-1.0px;color:#8a8a8a;white-space:nowrap;">Show axes</div>
<div style="position:absolute;left:1205px;top:219px;width:20px;height:20px;border-radius:3px;background:#f7f7f7;border:1px solid #555;"></div>
<div style="position:absolute;left:1233px;top:223.22500000000002px;font-family:'Liberation Mono', monospace;font-size:16.5px;line-height:1.1;letter-spacing:-1.0px;color:#000;white-space:nowrap;">Hold Camera</div>
<div style="position:absolute;left:1205px;top:249px;width:20px;height:20px;border-radius:3px;background:#f7f7f7;border:1px solid #555;"></div>
<div style="position:absolute;left:1233px;top:253.22500000000002px;font-family:'Liberation Mono', monospace;font-size:16.5px;line-height:1.1;letter-spacing:-1.0px;color:#000;white-space:nowrap;">Lock Color Bar</div>
<div style="position:absolute;left:1206px;top:280px;width:127px;height:19px;background:#fdfdfd;border:1px solid #d0d0d0;border-bottom-color:#b8b8b8;border-radius:3px;text-align:center;font-family:'Liberation Mono', monospace;font-size:16.5px;line-height:21.5px;letter-spacing:-1.0px;white-space:nowrap;">Redraw</div>
<div style="position:absolute;left:1343px;top:279px;width:20px;height:20px;border-radius:3px;background:#005fb8;"></div>
<svg style="position:absolute;left:1343px;top:279px" width="20" height="20"><path d="M5 10.5 L8.5 14 L15 7" fill="none" stroke="#fff" stroke-width="1.3"/></svg>
<div style="position:absolute;left:1371px;top:283.225px;font-family:'Liberation Mono', monospace;font-size:16.5px;line-height:1.1;letter-spacing:-1.0px;color:#000;white-space:nowrap;">Auto</div>
<div style="position:absolute;left:1206px;top:310px;width:264px;height:19px;background:#fdfdfd;border:1px solid #d0d0d0;border-bottom-color:#b8b8b8;border-radius:3px;text-align:center;font-family:'Liberation Mono', monospace;font-size:16.5px;line-height:21.5px;letter-spacing:-1.0px;white-space:nowrap;">Plot in New Window</div>
<div style="position:absolute;left:718px;top:390px;width:766px;height:20px;background:#e1e1e1;overflow:hidden;"></div>
<svg style="position:absolute;left:1046.5px;top:395.2px" width="16" height="10"><path d="M0 0 H15 L7.5 9.3 Z" fill="#000"/></svg>
<div style="position:absolute;left:1070px;top:390px;height:15px;width:120px;overflow:hidden;"><div style="position:absolute;left:0;top:3.5px;font-family:'Liberation Mono', monospace;font-size:16.5px;line-height:1.1;letter-spacing:-1.0px;white-space:nowrap;">Attributes</div></div>
<div style="position:absolute;left:718px;top:552px;width:766px;height:20px;background:#e1e1e1;overflow:hidden;"></div>
<svg style="position:absolute;left:1046.5px;top:557.2px" width="16" height="10"><path d="M0 0 H15 L7.5 9.3 Z" fill="#000"/></svg>
<div style="position:absolute;left:1070px;top:552px;height:15px;width:120px;overflow:hidden;"><div style="position:absolute;left:0;top:3.5px;font-family:'Liberation Mono', monospace;font-size:16.5px;line-height:1.1;letter-spacing:-1.0px;white-space:nowrap;">Parameters</div></div>
<div style="position:absolute;left:731px;top:423px;width:591px;height:107px;background:#f0f0f0;border:1px solid #7a8391;overflow:hidden;">
<div style="position:absolute;left:0;top:0;width:565px;height:79px;background:#fff;overflow:hidden;">
<div style="position:absolute;left:6px;top:0;width:160px;height:31px;border-right:1px solid #dcdcdc;font-weight:bold;font-size:14px;line-height:33px;text-align:center;padding:0 4px;white-space:nowrap;overflow:hidden;">Data set</div>
<div style="position:absolute;left:166px;top:0;width:160px;height:31px;border-right:1px solid #dcdcdc;font-weight:bold;font-size:14px;line-height:33px;text-align:center;padding:0 4px;white-space:nowrap;overflow:hidden;">Attribute</div>
<div style="position:absolute;left:326px;top:0;width:85px;height:31px;border-right:1px solid #dcdcdc;font-weight:bold;font-size:14px;line-height:33px;text-align:left;padding:0 4px;white-space:nowrap;overflow:hidden;"><span style="margin-left:-9px">ctor operat</span></div>
<div style="position:absolute;left:411px;top:0;width:85px;height:31px;border-right:1px solid #dcdcdc;font-weight:bold;font-size:14px;line-height:33px;text-align:left;padding:0 4px;white-space:nowrap;overflow:hidden;"><span style="margin-left:-6px">alar operati</span></div>
<div style="position:absolute;left:496px;top:0;width:68px;height:31px;border-right:1px solid #dcdcdc;font-weight:bold;font-size:14px;line-height:33px;text-align:right;padding:0 4px;white-space:nowrap;overflow:hidden;"><span style="margin-right:3px">Scale</span></div>
<div style="position:absolute;left:0;top:31px;width:6px;height:30px;background:#c0dcf3;"></div>
<div style="position:absolute;left:6px;top:31px;width:160px;height:30px;background:#3399ff;border-right:1px solid #3399ff;border-bottom:1px solid #3399ff;font-size:14px;line-height:32px;padding:0 4px;white-space:nowrap;overflow:hidden;color:#fff;">monitor:index</div>
<div style="position:absolute;left:166px;top:31px;width:160px;height:30px;background:#3399ff;border-right:1px solid #3399ff;border-bottom:1px solid #3399ff;font-size:14px;line-height:32px;padding:0 4px;white-space:nowrap;overflow:hidden;color:#fff;">index_x</div>
<div style="position:absolute;left:326px;top:31px;width:85px;height:30px;background:#3399ff;border-right:1px solid #3399ff;border-bottom:1px solid #3399ff;font-size:14px;line-height:32px;padding:0 4px;white-space:nowrap;overflow:hidden;color:#fff;">Not ...</div>
<div style="position:absolute;left:411px;top:31px;width:85px;height:30px;background:#3399ff;border-right:1px solid #3399ff;border-bottom:1px solid #3399ff;font-size:14px;line-height:32px;padding:0 4px;white-space:nowrap;overflow:hidden;color:#fff;">Re</div>
<div style="position:absolute;left:496px;top:31px;width:68px;height:30px;background:#3399ff;border-right:1px solid #3399ff;border-bottom:1px solid #3399ff;font-size:14px;line-height:32px;padding:0 4px;white-space:nowrap;overflow:hidden;color:#fff;">(1e0)</div>
<div style="position:absolute;left:0;top:61px;width:6px;height:30px;background:#fff;"></div>
<div style="position:absolute;left:6px;top:61px;width:160px;height:30px;background:#f3f3f3;border-right:1px solid #dcdcdc;border-bottom:1px solid #dcdcdc;font-size:14px;line-height:32px;padding:0 4px;white-space:nowrap;overflow:hidden;color:#000;">monitor:index</div>
<div style="position:absolute;left:166px;top:61px;width:160px;height:30px;background:#f3f3f3;border-right:1px solid #dcdcdc;border-bottom:1px solid #dcdcdc;font-size:14px;line-height:32px;padding:0 4px;white-space:nowrap;overflow:hidden;color:#000;">index_y</div>
<div style="position:absolute;left:326px;top:61px;width:85px;height:30px;background:#f3f3f3;border-right:1px solid #dcdcdc;border-bottom:1px solid #dcdcdc;font-size:14px;line-height:32px;padding:0 4px;white-space:nowrap;overflow:hidden;color:#a0a0a0;">Not</div>
<div style="position:absolute;left:411px;top:61px;width:85px;height:30px;background:#f3f3f3;border-right:1px solid #dcdcdc;border-bottom:1px solid #dcdcdc;font-size:14px;line-height:32px;padding:0 4px;white-space:nowrap;overflow:hidden;color:#000;">Re</div>
<div style="position:absolute;left:496px;top:61px;width:68px;height:30px;background:#f3f3f3;border-right:1px solid #dcdcdc;border-bottom:1px solid #dcdcdc;font-size:14px;line-height:32px;padding:0 4px;white-space:nowrap;overflow:hidden;color:#000;">(1e0)</div>
</div>
</div>
<div style="position:absolute;left:1303px;top:450px;width:11px;height:27px;background:#8a8a8a;"></div>
<div style="position:absolute;left:758px;top:511px;width:382px;height:11px;background:#8a8a8a;"></div>
<div style="position:absolute;left:1331px;top:423px;width:140px;height:105px;border:1px solid #d8d8d8;"></div>
<div style="position:absolute;left:1346px;top:438px;width:110px;height:18px;background:#fdfdfd;border:1px solid #d0d0d0;border-bottom-color:#b8b8b8;border-radius:3px;text-align:center;font-family:'Liberation Mono', monospace;font-size:16.5px;line-height:20.5px;letter-spacing:-1.0px;white-space:nowrap;">Duplicate</div>
<div style="position:absolute;left:1346px;top:467px;width:110px;height:18px;background:#fdfdfd;border:1px solid #d0d0d0;border-bottom-color:#b8b8b8;border-radius:3px;text-align:center;font-family:'Liberation Mono', monospace;font-size:16.5px;line-height:20.5px;letter-spacing:-1.0px;white-space:nowrap;">Remove</div>
<div style="position:absolute;left:731px;top:585px;width:323px;height:180px;background:#f0f0f0;border:1px solid #7a8391;overflow:hidden;">
<div style="position:absolute;left:0;top:0;width:327px;height:180px;background:#fff;overflow:hidden;">
<div style="position:absolute;left:6px;top:0;width:130px;height:31px;border-right:1px solid #dcdcdc;font-weight:bold;font-size:14px;line-height:33px;text-align:center;padding:0 4px;white-space:nowrap;overflow:hidden;">Attribute(s)</div>
<div style="position:absolute;left:136px;top:0;width:130px;height:31px;border-right:1px solid #dcdcdc;font-weight:bold;font-size:14px;line-height:33px;text-align:center;padding:0 4px;white-space:nowrap;overflow:hidden;">Parameter</div>
<div style="position:absolute;left:266px;top:0;width:60px;height:31px;border-right:1px solid #dcdcdc;font-weight:bold;font-size:14px;line-height:33px;text-align:left;padding:0 4px;white-space:nowrap;overflow:hidden;"><span style="margin-left:9px">Action</span></div>
<div style="position:absolute;left:0;top:31.0px;width:6px;height:31.2px;background:#c0dcf3;"></div>
<div style="position:absolute;left:6px;top:31.0px;width:130px;height:31.2px;background:#3399ff;border-right:1px solid #3399ff;border-bottom:1px solid #3399ff;font-size:14px;line-height:33.2px;padding:0 4px;white-space:nowrap;overflow:hidden;color:#fff;">monitor:index ...</div>
<div style="position:absolute;left:136px;top:31.0px;width:130px;height:31.2px;background:#3399ff;border-right:1px solid #3399ff;border-bottom:1px solid #3399ff;font-size:14px;line-height:33.2px;padding:0 4px;white-space:nowrap;overflow:hidden;color:#fff;">x</div>
<div style="position:absolute;left:266px;top:31.0px;width:60px;height:31.2px;background:#3399ff;border-right:1px solid #3399ff;border-bottom:1px solid #3399ff;font-size:14px;line-height:33.2px;padding:0 4px;white-space:nowrap;overflow:hidden;color:#fff;">Plot x axis</div>
<div style="position:absolute;left:0;top:62.2px;width:6px;height:31.2px;background:#fff;"></div>
<div style="position:absolute;left:6px;top:62.2px;width:130px;height:31.2px;background:#f3f3f3;border-right:1px solid #dcdcdc;border-bottom:1px solid #dcdcdc;font-size:14px;line-height:33.2px;padding:0 4px;white-space:nowrap;overflow:hidden;color:#000;">monitor:index ...</div>
<div style="position:absolute;left:136px;top:62.2px;width:130px;height:31.2px;background:#f3f3f3;border-right:1px solid #dcdcdc;border-bottom:1px solid #dcdcdc;font-size:14px;line-height:33.2px;padding:0 4px;white-space:nowrap;overflow:hidden;color:#000;">y</div>
<div style="position:absolute;left:266px;top:62.2px;width:60px;height:31.2px;background:#f3f3f3;border-right:1px solid #dcdcdc;border-bottom:1px solid #dcdcdc;font-size:14px;line-height:33.2px;padding:0 4px;white-space:nowrap;overflow:hidden;color:#000;">Plot y axis</div>
<div style="position:absolute;left:0;top:93.4px;width:6px;height:31.2px;background:#fff;"></div>
<div style="position:absolute;left:6px;top:93.4px;width:130px;height:31.2px;background:#fff;border-right:1px solid #dcdcdc;border-bottom:1px solid #dcdcdc;font-size:14px;line-height:33.2px;padding:0 4px;white-space:nowrap;overflow:hidden;color:#000;">monitor:index ...</div>
<div style="position:absolute;left:136px;top:93.4px;width:130px;height:31.2px;background:#fff;border-right:1px solid #dcdcdc;border-bottom:1px solid #dcdcdc;font-size:14px;line-height:33.2px;padding:0 4px;white-space:nowrap;overflow:hidden;color:#000;">z</div>
<div style="position:absolute;left:266px;top:93.4px;width:60px;height:31.2px;background:#fff;border-right:1px solid #dcdcdc;border-bottom:1px solid #dcdcdc;font-size:14px;line-height:33.2px;padding:0 4px;white-space:nowrap;overflow:hidden;color:#000;">Slice</div>
<div style="position:absolute;left:0;top:124.6px;width:6px;height:31.2px;background:#fff;"></div>
<div style="position:absolute;left:6px;top:124.6px;width:130px;height:31.2px;background:#f3f3f3;border-right:1px solid #dcdcdc;border-bottom:1px solid #dcdcdc;font-size:14px;line-height:33.2px;padding:0 4px;white-space:nowrap;overflow:hidden;color:#000;">monitor:index ...</div>
<div style="position:absolute;left:136px;top:124.6px;width:130px;height:31.2px;background:#f3f3f3;border-right:1px solid #dcdcdc;border-bottom:1px solid #dcdcdc;font-size:14px;line-height:33.2px;padding:0 4px;white-space:nowrap;overflow:hidden;color:#000;">lambda</div>
<div style="position:absolute;left:266px;top:124.6px;width:60px;height:31.2px;background:#f3f3f3;border-right:1px solid #dcdcdc;border-bottom:1px solid #dcdcdc;font-size:14px;line-height:33.2px;padding:0 4px;white-space:nowrap;overflow:hidden;color:#000;">Slice</div>
</div>
</div>
<div style="position:absolute;left:1061px;top:585px;width:410px;height:180px;border:1px solid #d8d8d8;"></div>
<div style="position:absolute;left:1078px;top:609.7249999999999px;font-family:'Liberation Mono', monospace;font-size:16.5px;line-height:1.1;letter-spacing:-1.0px;color:#000;white-space:nowrap;">Label</div>
<div style="position:absolute;left:1078px;top:643.2249999999999px;font-family:'Liberation Mono', monospace;font-size:16.5px;line-height:1.1;letter-spacing:-1.0px;color:#000;white-space:nowrap;">Axis min</div>
<div style="position:absolute;left:1078px;top:673.2249999999999px;font-family:'Liberation Mono', monospace;font-size:16.5px;line-height:1.1;letter-spacing:-1.0px;color:#000;white-space:nowrap;">Axis max</div>
<div style="position:absolute;left:1078px;top:703.2249999999999px;font-family:'Liberation Mono', monospace;font-size:16.5px;line-height:1.1;letter-spacing:-1.0px;color:#000;white-space:nowrap;">Units</div>
<div style="position:absolute;left:1160px;top:603px;width:293px;height:26px;background:#fff;border:1px solid #e0e0e0;border-bottom:1px solid #808080;border-radius:2px;"></div>
<div style="position:absolute;left:1163px;top:609.2249999999999px;font-family:'Liberation Mono', monospace;font-size:16.5px;line-height:1.1;letter-spacing:-1.0px;color:#000;white-space:nowrap;">x</div>
<div style="position:absolute;left:1160px;top:640px;width:293px;height:19px;background:#fff;border:1px solid #e0e0e0;border-bottom:1px solid #808080;border-radius:2px;"></div>
<div style="position:absolute;left:1163px;top:642.7249999999999px;font-family:'Liberation Mono', monospace;font-size:16.5px;line-height:1.1;letter-spacing:-1.0px;color:#000;white-space:nowrap;">-7.5e-07</div>
<div style="position:absolute;left:1160px;top:670px;width:293px;height:20px;background:#fff;border:1px solid #e0e0e0;border-bottom:1px solid #808080;border-radius:2px;"></div>
<div style="position:absolute;left:1163px;top:673.2249999999999px;font-family:'Liberation Mono', monospace;font-size:16.5px;line-height:1.1;letter-spacing:-1.0px;color:#000;white-space:nowrap;">7.5e-07</div>
<div style="position:absolute;left:1160px;top:699px;width:147px;height:21px;background:#fff;border:1px solid #d0d0d0;border-bottom:1px solid #999;border-radius:3px;"></div>
<div style="position:absolute;left:1164px;top:703.2249999999999px;font-family:'Liberation Mono', monospace;font-size:16.5px;line-height:1.1;letter-spacing:-1.0px;color:#000;white-space:nowrap;">(1e0)</div>
<svg style="position:absolute;left:1287px;top:706px" width="14" height="8"><path d="M1 1 L7 7 L13 1" fill="none" stroke="#333" stroke-width="1.3"/></svg>
<div style="position:absolute;left:1318px;top:700px;width:126px;height:20px;background:#f9f9f9;border-radius:2px;"></div>
<div style="position:absolute;left:1320px;top:702px;width:98px;height:15px;background:#f0f0f0;"></div>
<div style="position:absolute;left:1321px;top:705.2249999999999px;font-family:'Liberation Mono', monospace;font-size:16.5px;line-height:1.1;letter-spacing:-1.0px;color:#8a8a8a;white-space:nowrap;">m</div>
<svg style="position:absolute;left:1423px;top:707px" width="14" height="8"><path d="M1 1 L7 7 L13 1" fill="none" stroke="#b0b0b0" stroke-width="1.3"/></svg>
</body></html>
